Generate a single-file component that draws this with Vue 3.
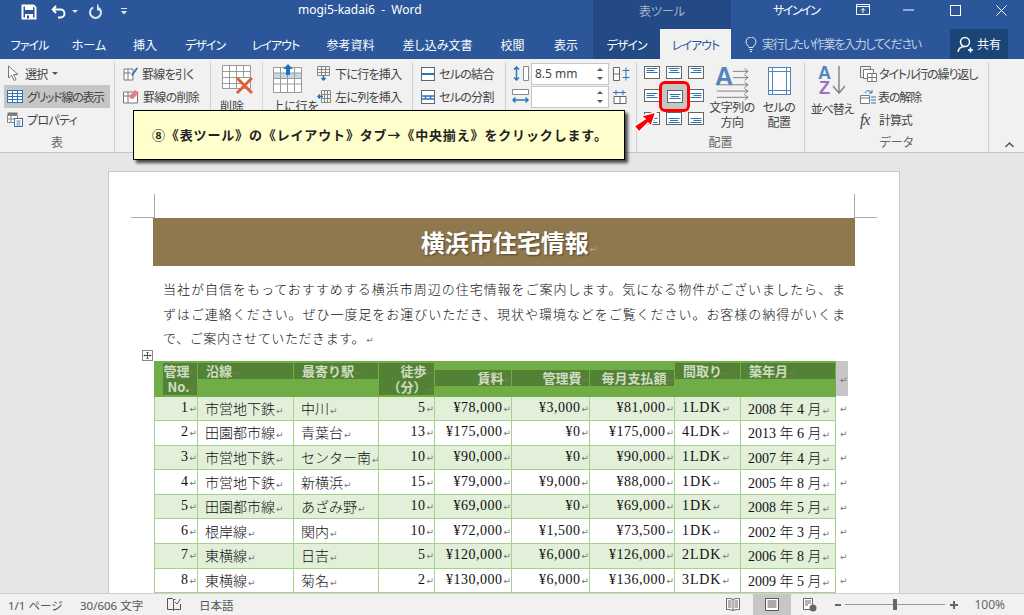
<script setup>
const tabs = [
  { label: 'ファイル', w: 59, kana: true }, { label: 'ホーム', w: 60 }, { label: '挿入', w: 52 }, { label: 'デザイン', w: 68, kana: true },
  { label: 'レイアウト', w: 73, kana: true }, { label: '参考資料', w: 77 }, { label: '差し込み文書', w: 97 }, { label: '校閲', w: 53 },
  { label: '表示', w: 54 }
]

const aligns = []
for (const v of [2.5, 4.5, 6.5]) {
  for (const h of ['l', 'c', 'r']) aligns.push({ h, y: v, id: h + v })
}
function alignX(h, i) {
  const w = i === 1 ? 8 : 11
  if (h === 'l') return [2.5, 2.5 + w]
  if (h === 'r') return [13.5 - w, 13.5]
  return [8 - (w / 2), 8 + (w / 2)]
}

const heads = [
  { lines: ['管理', 'No.'], cls: 'right full' },
  { lines: ['沿線'], cls: 'top' },
  { lines: ['最寄り駅'], cls: 'top' },
  { lines: ['徒歩', '（分）'], cls: 'right full' },
  { lines: ['賃料'], cls: 'right mid' },
  { lines: ['管理費'], cls: 'right mid' },
  { lines: ['毎月支払額'], cls: 'right mid' },
  { lines: ['間取り'], cls: 'top' },
  { lines: ['築年月'], cls: 'top' }
]

const rows = [
  ['1', '市営地下鉄', '中川', '5', '¥78,000', '¥3,000', '¥81,000', '1LDK', '2008 年 4 月'],
  ['2', '田園都市線', '青葉台', '13', '¥175,000', '¥0', '¥175,000', '4LDK', '2013 年 6 月'],
  ['3', '市営地下鉄', 'センター南', '10', '¥90,000', '¥0', '¥90,000', '1LDK', '2007 年 4 月'],
  ['4', '市営地下鉄', '新横浜', '15', '¥79,000', '¥9,000', '¥88,000', '1DK', '2005 年 8 月'],
  ['5', '田園都市線', 'あざみ野', '10', '¥69,000', '¥0', '¥69,000', '1DK', '2008 年 5 月'],
  ['6', '根岸線', '関内', '10', '¥72,000', '¥1,500', '¥73,500', '1DK', '2002 年 3 月'],
  ['7', '東横線', '日吉', '5', '¥120,000', '¥6,000', '¥126,000', '2LDK', '2006 年 8 月'],
  ['8', '東横線', '菊名', '2', '¥130,000', '¥6,000', '¥136,000', '3LDK', '2009 年 5 月']
]
const numCols = [0, 3, 4, 5, 6]
</script>

<template>
  <div class="word">
    <!-- タイトルバー -->
    <header class="titlebar">
      <div class="qat">
        <svg width="16" height="16" viewBox="0 0 16 16"><path d="M1.500 1.500h11l2 2v11h-13z" fill="none" stroke="#fff" stroke-width="2"/><rect x="4" y="1" width="8" height="5" fill="#fff"/><rect x="4" y="10" width="8" height="5" fill="#fff"/><rect x="6" y="11.5" width="2" height="3" fill="#2b579a"/></svg>
        <svg class="undo" width="16" height="16" viewBox="0 0 16 16"><path d="M5 2 1.800 5.500 5 9M2 5.500h7.500a4 4 0 0 1 0 8H7" fill="none" stroke="#fff" stroke-width="2"/></svg>
        <svg class="caret" width="6" height="4" viewBox="0 0 6 4"><path d="M0 0h6L3 3z" fill="#dfe6f1"/></svg>
        <svg class="redo" width="15" height="16" viewBox="0 0 15 16"><path d="M5.200 3.400a5.500 5.500 0 1 0 5 .2" fill="none" stroke="#dfe6f1" stroke-width="2"/><path d="M9 .5v6h3.500V5H10.500V.5z" fill="#dfe6f1"/></svg>
        <svg class="more" width="6" height="7" viewBox="0 0 6 7"><path d="M0 0h6v1H0zM0 3h6L3 6.500z" fill="#dfe6f1"/></svg>
      </div>
      <div class="doc-title">mogi5-kadai6&nbsp;&nbsp;-&nbsp;&nbsp;Word</div>
      <div class="tool-title">表ツール</div>
      <div class="signin">サインイン</div>
      <div class="winbtns">
        <svg width="14" height="12" viewBox="0 0 14 12"><path d="M.5.500h13v10H.5zM.5 2.500h13M7 9V4.500M5 6.500l2-2 2 2" fill="none" stroke="#fff"/></svg>
        <svg width="11" height="2" viewBox="0 0 11 2"><path d="M0 1h11" stroke="#fff"/></svg>
        <svg width="11" height="11" viewBox="0 0 11 11"><rect x=".5" y=".5" width="10" height="10" fill="none" stroke="#fff"/></svg>
        <svg width="11" height="11" viewBox="0 0 11 11"><path d="m.5.500 10 10M10.500.500l-10 10" stroke="#fff"/></svg>
      </div>
    </header>

    <!-- タブ -->
    <nav class="tabs">
      <div v-for="t in tabs" :key="t.label" class="tab" :class="{ kana: t.kana }" :style="{ width: t.w + 'px' }">{{ t.label }}</div>
      <div class="tab ctx kana">デザイン</div>
      <div class="tab active kana">レイアウト</div>
      <div class="tell">
        <svg width="12" height="15" viewBox="0 0 12 15"><path d="M4 10.500C3.500 8.500 1 7.500 1 5a5 5 0 0 1 10 0c0 2.500-2.500 3.500-3 5.500zM4.500 12.500h3M5 14.500h2" fill="none" stroke="#e6ebf3"/></svg>
        <span>実行したい作業を入力してください</span>
      </div>
      <div class="share">
        <svg width="17" height="17" viewBox="0 0 17 17"><circle cx="8" cy="6" r="4.500" fill="none" stroke="#fff" stroke-width="1.500"/><path d="M1 16c.5-4 3-5.500 7-5.500M11 14h5M13.500 11.500v5" fill="none" stroke="#fff" stroke-width="1.500"/></svg>
        <span>共有</span>
      </div>
    </nav>

    <!-- リボン -->
    <section class="ribbon">
      <div class="group g-table">
        <div class="body col">
          <div class="sm">
            <svg width="14" height="17" viewBox="0 0 14 17"><path d="M1.500 1v12l3-3 2.500 5.500 2-1L6.500 9.500H11z" fill="#fff" stroke="#777"/></svg>
            <span>選択</span>
            <svg class="small-caret" width="6" height="3" viewBox="0 0 6 3"><path d="M0 0h6L3 3z" fill="#555"/></svg>
          </div>
          <div class="sm on">
            <svg width="16" height="13" viewBox="0 0 16 13"><rect x=".5" y=".5" width="15" height="12" fill="#fff" stroke="#2e75b6"/><path d="M.5 3.500h15M.5 6.500h15M.5 9.500h15M5.500.500v12M10.500.500v12" stroke="#2e75b6"/></svg>
            <span>グリッド線の表示</span>
          </div>
          <div class="sm">
            <svg width="16" height="15" viewBox="0 0 16 15"><path d="M.5.500h10v3H.5z" fill="#777"/><path d="M.5 3.500h10v7H.500zM4 3.500v7M.5 7h10" fill="#fff" stroke="#888"/><rect x="7.500" y="6.500" width="8" height="8" fill="#fff" stroke="#2e75b6"/><path d="M9.500 9h4M9.500 11h4M9.500 13h4" stroke="#777"/></svg>
            <span>プロパティ</span>
          </div>
        </div>
        <div class="glabel">表</div>
      </div>

      <div class="group g-draw">
        <div class="body col">
          <div class="sm">
            <svg width="15" height="15" viewBox="0 0 15 15"><path d="M1 3h9v11H1zM1 7h7M5 3v11" fill="#fff" stroke="#777"/><path d="m8 9 5.500-7.500 1.500 1L9.500 10z" fill="#2e75b6"/></svg>
            <span>罫線を引く</span>
          </div>
          <div class="sm">
            <svg width="16" height="15" viewBox="0 0 16 15"><path d="M.5 3h14v11H.500zM.5 7h10M5 3v11" fill="#fff" stroke="#777"/><path d="m6 7 6-6 4 3-6 6H8z" fill="#e5808f"/></svg>
            <span>罫線の削除</span>
          </div>
        </div>
      </div>

      <div class="group g-rows">
        <div class="big-del">
          <svg width="31" height="31" viewBox="0 0 31 31"><path d="M.5.500h28v23H.5zM.5 6.500h28M.5 12.500h28M.5 18.500h20M7.500.500v23M14.500.500v23M21.500.500v12" fill="#fff" stroke="#999"/><path d="m15 13 15 15M30 13 15 28" stroke="#d9603b" stroke-width="3"/></svg>
          <span class="biglabel">削除</span>
        </div>
        <div class="big-ins">
          <svg width="30" height="29" viewBox="0 0 30 29"><path d="M.5 3.500h28v25H.5z" fill="#fff" stroke="#999"/><rect x="1" y="9" width="27" height="5" fill="#c5d7ea"/><path d="M.5 9h28M.5 14.500h28M.5 20h28M7.500 3.500v25M14.500 3.500v25M21.500 3.500v25" stroke="#999" fill="none"/><path d="M15 0l5 5h-3v6h-4V5h-3z" fill="#2372ba"/></svg>
          <span class="biglabel">上に行を</span>
        </div>
        <div class="col ins-col">
          <div class="sm">
            <svg width="14" height="15" viewBox="0 0 14 15"><path d="M.5.500h12v9H.500zM.5 3.500h12M.5 6.500h12M4.500.500v9M8.500.500v9" fill="#f4f4f4" stroke="#888"/><path d="M6.500 9v5M4.500 12l2 2 2-2" fill="none" stroke="#2372ba" stroke-width="1.500"/></svg>
            <span>下に行を挿入</span>
          </div>
          <div class="sm">
            <svg width="14" height="14" viewBox="0 0 14 14"><path d="M4.500.500h9v12h-9zM4.500 4.500h9M4.500 8.500h9M7.500.500v12M10.500.500v12" fill="#f4f4f4" stroke="#888"/><path d="M6 6.500H1M3 4.500l-2 2 2 2" fill="none" stroke="#2372ba" stroke-width="1.500"/></svg>
            <span>左に列を挿入</span>
          </div>
        </div>
      </div>

      <div class="group g-merge">
        <div class="body col">
          <div class="sm">
            <svg width="14" height="14" viewBox="0 0 14 14"><rect x=".5" y=".5" width="13" height="13" fill="#fff" stroke="#666"/><path d="M.5 7h13" stroke="#2e75b6" stroke-width="2"/></svg>
            <span>セルの結合</span>
          </div>
          <div class="sm">
            <svg width="14" height="14" viewBox="0 0 14 14"><rect x=".5" y=".5" width="13" height="13" fill="#fff" stroke="#666"/><path d="M.5 6h13M.5 9h13M4.500 6v3M9.500 6v3" stroke="#2e75b6" stroke-width="1.500"/></svg>
            <span>セルの分割</span>
          </div>
        </div>
      </div>

      <div class="group g-size">
        <div class="size-row">
          <svg width="17" height="15" viewBox="0 0 17 15"><path d="M11.500.500h5v14h-5z" fill="#fff" stroke="#888"/><path d="M4.500 1v13M2 3.500 4.500 1 7 3.500M2 11.500 4.500 14 7 11.500" fill="none" stroke="#2e75b6" stroke-width="1.500"/></svg>
          <div class="spin"><span>8.5 mm</span><i class="arrows"></i></div>
          <svg width="17" height="14" viewBox="0 0 17 14"><path d="M.5.500h6v13h-6zM.5 7h6" fill="#fff" stroke="#666"/><path d="M13 .5v13M9.500 3.500H16.500M9.500 10.500h7" stroke="#2e75b6" fill="none"/></svg>
        </div>
        <div class="size-row">
          <svg width="17" height="15" viewBox="0 0 17 15"><path d="M.5.500h16v5H.500z" fill="#fff" stroke="#888"/><path d="M1 11h15M3.500 8.500 1 11l2.500 2.500M13.500 8.500 16 11l-2.500 2.500" fill="none" stroke="#2e75b6" stroke-width="1.500"/></svg>
          <div class="spin"><span></span><i class="arrows"></i></div>
          <svg width="17" height="14" viewBox="0 0 17 14"><path d="M1 6.500h12v7H1zM7 6.500v7" fill="#fff" stroke="#666"/><path d="M3 0v5M10 0v5M0 2.500h13" stroke="#2e75b6" fill="none"/></svg>
        </div>
      </div>

      <div class="group g-align">
        <div class="align-grid">
          <svg v-for="a in aligns" :key="a.id" width="16" height="13" viewBox="0 0 16 13">
            <rect x=".5" y=".5" width="15" height="12" fill="#fff" stroke="#666"/>
            <path v-for="i in [0, 1, 2]" :key="i" :d="`M${alignX(a.h, i)[0]} ${a.y + i * 2}H${alignX(a.h, i)[1]}`" stroke="#2e75b6" fill="none"/>
          </svg>
        </div>
        <div class="big-text">
          <svg class="vis" width="34" height="34" viewBox="0 0 38 38"><text x="0" y="21" font-family="Liberation Sans, sans-serif" font-weight="700" font-size="28" fill="#4f86bd">A</text><path d="M20 6h17M20 13h17M2 21h35M2 28h35M2 35h35M33 3l4 3-4 3M33 10l4 3-4 3M33 18l4 3-4 3M33 25l4 3-4 3M33 32l4 3-4 3" fill="none" stroke="#777"/></svg>
          <span class="cap">文字列の<br>方向</span>
        </div>
        <div class="big-margin">
          <svg width="23" height="28" viewBox="0 0 23 28"><rect x=".5" y=".5" width="22" height="27" fill="#fff" stroke="#4f86bd"/><path d="M.5 4.500h22M.5 23.500h22M4.500.500v27M18.500.500v27" stroke="#4f86bd" fill="none"/></svg>
          <span class="cap">セルの<br>配置</span>
        </div>
        <div class="glabel">配置</div>
      </div>

      <div class="group g-data">
        <div class="big-sort">
          <svg class="vis" width="28" height="30" viewBox="0 0 28 30"><text x="0" y="14" font-family="Liberation Sans, sans-serif" font-weight="700" font-size="18" fill="#4f86bd">A</text><text x="1" y="29" font-family="Liberation Sans, sans-serif" font-weight="700" font-size="18" fill="#9a6fbe">Z</text><path d="M21 1v27M15 21l6 7 6-7" fill="none" stroke="#888" stroke-width="1.500"/></svg>
          <span class="cap">並べ替え</span>
        </div>
        <div class="col data-col">
          <div class="sm">
            <svg width="17" height="16" viewBox="0 0 17 16"><path d="M.5.500h10v11H.500z" fill="#eee" stroke="#777"/><path d="M3.500 3.500h10v9h-10z" fill="#fff" stroke="#777"/><path d="M7.500 7.500h9v8h-9zM7.500 11.500h9M12 7.500v8" fill="#fff" stroke="#777"/></svg>
            <span>タイトル行の繰り返し</span>
          </div>
          <div class="sm">
            <svg width="16" height="15" viewBox="0 0 16 15"><path d="M.5 6.500h9v8h-9zM.5 9h9" fill="#fff" stroke="#777"/><path d="M5 4c1-3 5-3 7 0M12 1v3h-3M11 8h5M11 11h5M11 14h5" fill="none" stroke="#2e75b6"/></svg>
            <span>表の解除</span>
          </div>
          <div class="sm">
            <span class="fx">fx</span>
            <span>計算式</span>
          </div>
        </div>
        <div class="glabel">データ</div>
      </div>

      <svg class="collapse" width="9" height="6" viewBox="0 0 9 6"><path d="m.5 5 4-4 4 4" fill="none" stroke="#555" stroke-width="1.500"/></svg>
    </section>

    <!-- 文書 -->
    <main class="canvas">
      <div class="page">
        <i class="crop c1"></i><i class="crop c2"></i><i class="crop c3"></i><i class="crop c4"></i>
        <h1 class="band">横浜市住宅情報<span class="mk band-mk">↵</span></h1>
        <div class="para">
          <div class="ln">当社が自信をもっておすすめする横浜市周辺の住宅情報をご案内します。気になる物件がございましたら、ま</div>
          <div class="ln">ずはご連絡ください。ぜひ一度足をお運びいただき、現状や環境などをご覧ください。お客様の納得がいくま</div>
          <div class="ln last">で、ご案内させていただきます。<span class="mk">↵</span></div>
        </div>
        <div class="handle">
          <svg width="11" height="11" viewBox="0 0 11 11"><rect x=".5" y=".5" width="10" height="10" fill="#fff" stroke="#888"/><path d="M5.500 2v7M2 5.500h7M4.500 3l1-1 1 1M4.500 8l1 1 1-1M3 4.500l-1 1 1 1M8 4.500l1 1-1 1" fill="none" stroke="#333" stroke-width=".8"/></svg>
        </div>
        <table class="tbl">
          <colgroup>
            <col style="width:43px"><col style="width:96px"><col style="width:85px"><col style="width:56px"><col style="width:77px"><col style="width:78px"><col style="width:85px"><col style="width:66px"><col style="width:95px"><col style="width:12px">
          </colgroup>
          <thead>
            <tr>
              <th v-for="h in heads" :key="h.lines[0]" :class="h.cls">
                <div class="hband"><div v-for="l in h.lines" :key="l">{{ l }}<span class="mk">↵</span></div></div>
              </th>
              <td class="eor sel"><span class="mk">↵</span></td>
            </tr>
          </thead>
          <tbody>
            <tr v-for="(r, ri) in rows" :key="r[0]" :class="{ odd: ri % 2 === 0 }">
              <td v-for="(c, ci) in r" :key="ci" :class="{ num: numCols.includes(ci), wide: ci === 7 }">{{ c }}<span class="mk">↵</span></td>
              <td class="eor"><span class="mk">↵</span></td>
            </tr>
          </tbody>
        </table>
      </div>
    </main>

    <!-- ステータスバー -->
    <footer class="status">
      <span class="s1">1/1 ページ</span>
      <span class="s2">30/606 文字</span>
      <svg class="s3" width="14" height="13" viewBox="0 0 14 13"><path d="M.5.500h5l1 1v11l-1-1h-5zM6.500 1.500h2M6.500 12.500l1-1h6V6" fill="none" stroke="#555"/><path d="m8 4 2 2 3.500-5" fill="none" stroke="#555"/></svg>
      <span class="s4">日本語</span>
      <div class="status-right">
        <svg width="14" height="13" viewBox="0 0 14 13"><path d="M7 1.500C5 .5 3 .5.500.500v11c2.500 0 4.500 0 6.500 1 2-1 4-1 6.500-1V.500C11 .5 9 .5 7 1.500zM7 1.500v11M2 3h3.500M2 5h3.500M2 7h3.500M2 9h3.500M8.500 3H12M8.500 5H12M8.500 7H12M8.500 9H12" fill="#fff" stroke="#666"/></svg>
        <div class="view-on"><svg width="14" height="13" viewBox="0 0 14 13"><path d="M.5.500h13v12H.500zM2.500 3h9M2.500 5h9M2.500 7h9M2.500 9h9" fill="#fff" stroke="#555"/></svg></div>
        <svg class="web" width="14" height="14" viewBox="0 0 14 14"><path d="M.5.500h9v11H.500zM2 3h6M2 5h6M2 7h3" fill="#fff" stroke="#666"/><circle cx="10" cy="10" r="3.500" fill="#666"/></svg>
        <div class="zoom">
          <i class="minus"></i>
          <div class="track"><i class="thumb"></i></div>
          <i class="plus"></i>
        </div>
        <span class="pct">100%</span>
      </div>
    </footer>

    <!-- 吹き出し -->
    <div class="callout">⑧《表ツール》の《レイアウト》タブ→《中央揃え》をクリックします。</div>
    <svg class="arrow" width="28" height="24" viewBox="0 0 28 24"><path d="M25 2 10 6l4 3L3 16l5 6 9-9 3 3z" fill="#f00" stroke="#fff" stroke-width="1.500"/></svg>
    <div class="hilite"><svg width="16" height="13" viewBox="0 0 16 13"><rect x=".5" y=".5" width="15" height="12" fill="#fff" stroke="#666"/><path d="M2.500 4.500h11M4 6.500h8M2.500 8.500h11" stroke="#2e75b6" fill="none"/></svg></div>
  </div>
</template>

<style>
html, body { margin: 0; padding: 0; overflow: hidden; }
</style>

<style scoped>
.word {
  position: relative;
  width: 1024px;
  height: 615px;
  overflow: hidden;
  display: flex;
  flex-direction: column;
  font-family: "Noto Sans", "Noto Sans CJK JP", sans-serif;
  font-feature-settings: "palt";
  font-size: 12px;
  color: #444;
  background: #e6e6e6;
}
svg { display: block; }
svg.vis { overflow: visible; }
.titlebar {
  height: 29px;
  flex: none;
  display: flex;
  align-items: stretch;
  background: #2b579a;
  color: #fff;
}
.qat { width: 298px; display: flex; align-items: center; padding-left: 21px; box-sizing: border-box; margin-top: -6px; }
.undo { margin-left: 14px; }
.caret { margin-left: 5px; }
.redo { margin-left: 10px; }
.more { margin-left: 18px; }
.doc-title { width: 295px; font-size: 12px; padding-top: 2px; line-height: 16px; white-space: nowrap; }
.tool-title { width: 138px; background: #234a85; color: #a8b5c9; text-align: center; line-height: 23px; font-size: 12px; }
.signin { margin-left: 42px; width: 83px; line-height: 21px; font-size: 12px; letter-spacing: -1.5px; }
.winbtns { display: flex; align-items: center; margin-top: -9px; }
.winbtns svg:nth-child(2) { margin-left: 33px; }
.winbtns svg:nth-child(3) { margin-left: 36px; }
.winbtns svg:nth-child(4) { margin-left: 35px; }

.tabs { height: 30px; flex: none; display: flex; background: #2b579a; color: #fff; padding-right: 16px; box-sizing: border-box; }
.tab { display: flex; align-items: center; justify-content: center; font-size: 12px; padding-top: 1px; box-sizing: border-box; }
.kana { letter-spacing: -1px; }
.ctx { width: 67px; background: #234a85; }
.active { width: 71px; background: #f1f1f1; color: #2b579a; }
.tell { display: flex; align-items: center; gap: 5px; margin-left: 14px; color: #c5d0e2; width: 190px; font-size: 12px; letter-spacing: -1.25px; white-space: nowrap; }
.share { margin-left: auto; width: 58px; background: #1b4477; display: flex; align-items: center; justify-content: center; gap: 3px; font-size: 12px; }

.ribbon { position: relative; height: 94px; flex: none; display: flex; background: #f1f1f1; border-bottom: 1px solid #c6c6c6; box-sizing: border-box; padding-top: 3px; }
.group { position: relative; border-right: 1px solid #d0d0d0; height: 90px; box-sizing: border-box; flex: none; }
.g-table { width: 115px; }
.g-draw { width: 96px; }
.g-rows { width: 202px; display: flex; }
.g-merge { width: 93px; }
.g-size { width: 131px; padding: 0 0 0 6px; }
.g-align { width: 168px; display: flex; }
.g-data { width: 184px; display: flex; }
.col { display: flex; flex-direction: column; }
.body { padding-left: 4px; }
.sm { height: 23px; display: flex; align-items: center; gap: 4px; padding-left: 3px; white-space: nowrap; font-size: 12px; letter-spacing: -.7px; color: #444; box-sizing: border-box; }
.sm svg { flex: none; }
.on { background: #c6c6c6; width: 106px; letter-spacing: -1.3px; }
.glabel { position: absolute; left: 0; right: 0; bottom: 0; text-align: center; font-size: 12px; line-height: 18px; color: #666; }
.g-draw .body { padding-left: 5px; }
.g-merge .body { padding-left: 5px; }
.big-del { width: 52px; padding: 3px 0 0 11px; box-sizing: border-box; border-right: 1px solid #d8d8d8; height: 60px; }
.big-ins { width: 50px; padding: 2px 0 0 10px; box-sizing: border-box; }
.biglabel { display: block; font-size: 12px; line-height: 14px; margin-top: 4px; white-space: nowrap; margin-left: -2px; }
.big-ins .biglabel { margin-left: -1px; margin-top: 7px; }
.ins-col { padding-left: 1px; }
.size-row { display: flex; align-items: center; gap: 2px; height: 23px; }
.size-row svg:last-child { margin-left: 2px; }
.spin { width: 78px; height: 22px; background: #fff; border: 1px solid #c6c6c6; box-sizing: border-box; display: flex; align-items: center; justify-content: space-between; padding: 0 8px 0 3px; font-size: 12px; }
.arrows { width: 0; height: 14px; position: relative; }
.arrows::before, .arrows::after { content: ""; position: absolute; left: -3px; border-left: 3px solid transparent; border-right: 3px solid transparent; }
.arrows::before { top: 1px; border-bottom: 3px solid #555; }
.arrows::after { bottom: 1px; border-top: 3px solid #555; }
.align-grid { display: grid; grid-template-columns: repeat(3, 16px); column-gap: 6px; row-gap: 10px; padding: 4px 0 0 7px; align-content: start; height: 60px; }
.big-text { margin-left: 5px; width: 46px; display: flex; flex-direction: column; align-items: center; padding-top: 4px; }
.big-margin { width: 48px; display: flex; flex-direction: column; align-items: center; padding-top: 5px; }
.cap { font-size: 12px; line-height: 15px; text-align: center; white-space: nowrap; color: #444; margin-top: 0; letter-spacing: -.5px; }
.big-margin .cap { margin-top: 5px; }
.big-sort { width: 54px; display: flex; flex-direction: column; align-items: center; padding-top: 3px; }
.big-sort .cap { margin-top: 7px; letter-spacing: -1.2px; }
.data-col { margin-left: -2px; }
.data-col .sm { gap: 2px; letter-spacing: -1.1px; }
.fx { font-family: "Liberation Serif", serif; font-style: italic; font-size: 16px; width: 17px; }
.collapse { position: absolute; left: 1005px; top: 83px; }

.canvas { flex: 1; min-height: 0; background: #e6e6e6; padding: 18px 0 0 108px; overflow: hidden; }
.page {
  position: relative;
  width: 792px;
  height: 500px;
  background: #fff;
  box-sizing: border-box;
  border: 1px solid #c6c6c6;
  padding: 46px 0 0 44px;
  font-family: "Liberation Serif", "Noto Sans CJK JP", serif;
  font-feature-settings: normal;
  color: #222;
}
.crop { position: absolute; background: #aaa; }
.c1 { left: 45px; top: 22px; width: 1px; height: 24px; }
.c2 { left: 22px; top: 45px; width: 23px; height: 1px; }
.c3 { left: 745px; top: 22px; width: 1px; height: 24px; }
.c4 { left: 745px; top: 45px; width: 23px; height: 1px; }
.band { margin: 0; width: 702px; height: 48px; box-sizing: border-box; padding-left: 10px; background: #8f784e; color: #fff; font-size: 24px; line-height: 47px; font-weight: 700; text-align: center; text-shadow: 1px 1px 2px rgba(0, 0, 0, .45); font-family: "Noto Sans CJK JP", sans-serif; }
.mk { font-family: "DejaVu Sans", sans-serif; font-size: 9px; line-height: 0; font-weight: 400; color: #777; text-shadow: none; letter-spacing: 0; margin-left: 1px; }
.band-mk { color: #b8a98c; }
.para { margin: 11px 0 0 10px; width: 682px; font-size: 13px; line-height: 24.5px; font-family: "Noto Sans CJK JP", serif; font-weight: 300; color: #111; }
.ln { text-align: justify; text-align-last: justify; text-justify: inter-character; white-space: nowrap; }
.ln.last { text-align-last: left; letter-spacing: .6px; }
.handle { position: absolute; left: 33px; top: 178px; width: 11px; height: 11px; }
.tbl { margin: 10px 0 0 1px; border-collapse: collapse; table-layout: fixed; width: 693px; font-size: 13px; }
th, td { padding: 0; box-sizing: border-box; }
th { background: #70ad47; height: 35px; border: 1px solid #70ad47; border-right: 1px dotted #fff; font-weight: 700; color: #cfdcc4; vertical-align: top; text-align: left; font-family: "Noto Sans CJK JP", serif; line-height: 16px; font-size: 13px; }
th:nth-child(9) { border-right: 1px solid #70ad47; }
th .hband { background: #548235; margin-top: 1px; padding-left: 8px; }
th.right { text-align: right; }
th.right .hband { padding-left: 0; }
th.full .hband { height: 32px; }
th.mid .hband { margin-top: 8px; height: 16px; }
th.mid .mk, th.full .mk { margin-left: 0; }
th:first-child .hband { margin-left: 8px; }
tbody td { height: 24.6px; border: 1px solid #a8d08d; background: #fff; padding: 0 0 1px 7px; white-space: nowrap; font-family: "Liberation Serif", "Noto Sans CJK JP", serif; font-weight: 300; color: #111; font-size: 14px; overflow: hidden; }
tbody tr.odd td { background: #e2efd9; }
tbody td.num { text-align: right; padding: 0 0 1px; letter-spacing: .5px; }
tbody td.wide { letter-spacing: .9px; }
.tbl td.eor { border: none; background: none; padding: 0 0 0 3px; }
.tbl tbody tr.odd td.eor { background: none; }
thead td.eor.sel { background: #c6c6c6; }

.status { height: 22px; flex: none; background: #f1f1f1; display: flex; align-items: center; font-size: 11.5px; color: #555; border-top: 1px solid #d0d0d0; box-sizing: border-box; }
.s1 { margin-left: 8px; width: 72px; }
.s2 { width: 87px; }
.s3 { margin-right: 18px; }
.status-right { margin-left: auto; display: flex; align-items: center; height: 100%; }
.view-on { width: 38px; height: 100%; margin-left: 13px; background: #c6c6c6; display: flex; align-items: center; justify-content: center; }
.web { margin-left: 12px; }
.zoom { display: flex; align-items: center; margin-left: 18px; }
.minus { width: 6px; height: 2px; background: #666; }
.track { position: relative; width: 100px; height: 1px; background: #999; margin: 0 5px 0 4px; }
.thumb { position: absolute; left: 48px; top: -5px; width: 4px; height: 11px; background: #666; }
.plus { position: relative; width: 8px; height: 2px; background: #666; }
.plus::after { content: ""; position: absolute; left: 3px; top: -3px; width: 2px; height: 8px; background: #666; }
.pct { margin: 0 19px 0 16px; font-size: 12px; color: #666; }

.callout {
  position: absolute;
  left: 133px;
  top: 110px;
  width: 492px;
  height: 50px;
  box-sizing: border-box;
  background: #ffffcc;
  border: 1px solid #000;
  box-shadow: 3px 3px 3px rgba(0, 0, 0, .7);
  padding-left: 18px;
  line-height: 47px;
  font-size: 13px;
  letter-spacing: .85px;
  font-weight: 700;
  color: #222;
  font-feature-settings: normal;
  font-family: "Noto Sans CJK JP", sans-serif;
  white-space: nowrap;
}
.arrow { position: absolute; left: 631px; top: 110px; }
.hilite {
  position: absolute;
  left: 659px;
  top: 81px;
  width: 31px;
  height: 31px;
  box-sizing: border-box;
  background: #c6c6c6;
  border: 3px solid #f00;
  border-radius: 6px;
  display: flex;
  align-items: center;
  justify-content: center;
}
</style>
